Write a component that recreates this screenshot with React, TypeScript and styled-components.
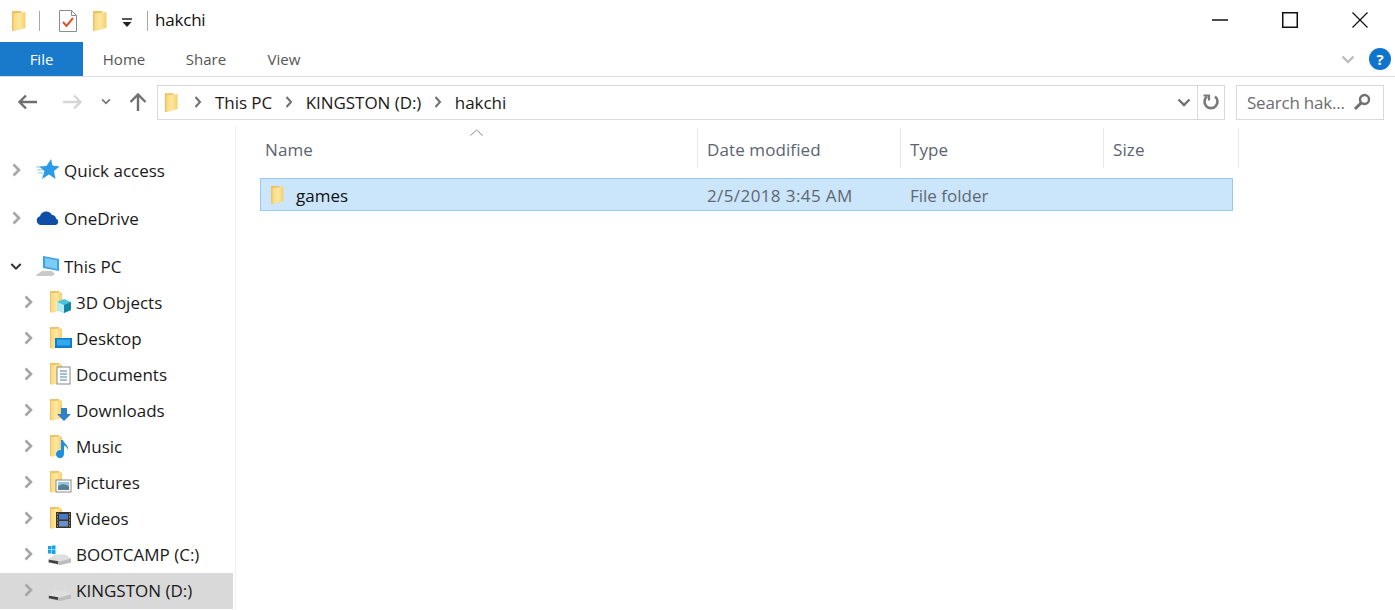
import styled, { createGlobalStyle } from "styled-components";

const GlobalStyle = createGlobalStyle`
  html, body {
    margin: 0;
    padding: 0;
    background: #fff;
  }
  * {
    box-sizing: border-box;
  }
`;

const Window = styled.div`
  width: 1395px;
  height: 610px;
  overflow: hidden;
  display: flex;
  flex-direction: column;
  background: #fff;
  color: #1a1a1a;
  font-family: "Open Sans", "Noto Sans", sans-serif;
  font-size: 17px;
`;

const TitleBar = styled.div`
  height: 42px;
  display: flex;
  align-items: center;
  padding-left: 11px;
`;

const QuickSep = styled.div<{ $left: number }>`
  width: 1px;
  height: 20px;
  margin-left: ${({ $left }) => $left}px;
  background: #a8a8a8;
`;

const QuickIcon = styled.div<{ $left: number; $top?: number }>`
  display: flex;
  margin-left: ${({ $left }) => $left}px;
  margin-top: ${({ $top }) => $top ?? 0}px;
`;

const TitleText = styled.div`
  margin-left: 7px;
  margin-top: -3px;
  font-size: 17px;
  letter-spacing: -0.2px;
  color: #111;
`;

const WindowControls = styled.div`
  margin-left: auto;
  display: flex;
  height: 100%;
`;

const ControlButton = styled.div`
  width: 70px;
  display: flex;
  align-items: center;
  justify-content: center;
  padding-bottom: 3px;
`;

const TabBar = styled.div`
  height: 35px;
  display: flex;
  align-items: stretch;
  border-bottom: 1px solid #dadbdc;
`;

const FileTab = styled.div`
  width: 83px;
  height: 34px;
  background: #1979ca;
  color: #fff;
  display: flex;
  align-items: center;
  justify-content: center;
  font-size: 15px;
`;

const Tab = styled.div<{ $width: number }>`
  width: ${({ $width }) => $width}px;
  display: flex;
  align-items: center;
  justify-content: center;
  font-size: 15px;
  color: #555;
`;

const TabTools = styled.div`
  margin-left: auto;
  display: flex;
  align-items: center;
  gap: 12px;
  padding-right: 4px;
`;

const HelpBadge = styled.div`
  width: 22px;
  height: 22px;
  border-radius: 50%;
  background: #0f74cc;
  color: #fff;
  font-size: 15px;
  font-weight: 700;
  display: flex;
  align-items: center;
  justify-content: center;
`;

const NavRow = styled.div`
  height: 49px;
  display: flex;
  align-items: center;
  padding: 0 11px 0 17px;
`;

const NavButtons = styled.div`
  width: 140px;
  display: flex;
  align-items: center;
`;

const NavButton = styled.div<{ $left?: number }>`
  display: flex;
  margin-left: ${({ $left }) => $left ?? 0}px;
`;

const AddressBox = styled.div`
  width: 1068px;
  height: 35px;
  margin-top: 1px;
  border: 1px solid #d9d9d9;
  display: flex;
  align-items: center;
  padding-left: 6px;
`;

const AddressFolder = styled.div`
  display: flex;
  margin-right: 15px;
`;

const Crumb = styled.span`
  color: #1a1a1a;
  font-size: 17px;
  margin: 0 12.5px 0 13px;
  white-space: nowrap;
  letter-spacing: -0.05px;
`;

const AddressEnd = styled.div`
  margin-left: auto;
  height: 100%;
  display: flex;
  align-items: center;
`;

const AddressRefresh = styled.div`
  width: 27px;
  height: 100%;
  border-left: 1px solid #d9d9d9;
  margin-left: 6px;
  display: flex;
  align-items: center;
  justify-content: center;
`;

const SearchBox = styled.div`
  width: 148px;
  height: 35px;
  margin-top: 1px;
  margin-left: 11px;
  border: 1px solid #d9d9d9;
  display: flex;
  align-items: center;
  justify-content: space-between;
  padding: 0 12px 0 10px;
  color: #6d6d6d;
  font-size: 17px;
  letter-spacing: -0.2px;
  white-space: nowrap;
`;

const Body = styled.div`
  flex: 1;
  display: flex;
  min-height: 0;
`;

const Sidebar = styled.nav`
  width: 236px;
  padding-top: 27px;
  padding-right: 2px;
  border-right: 1px solid #f0f0f0;
  display: flex;
  flex-direction: column;
`;

const TreeRow = styled.div<{ $level: number; $selected?: boolean; $gap?: boolean }>`
  height: 36px;
  flex: none;
  display: flex;
  align-items: center;
  margin-bottom: ${({ $gap }) => ($gap ? 12 : 0)}px;
  padding-left: ${({ $level }) => ($level ? 22 : 10)}px;
  padding-bottom: 2px;
  background: ${({ $selected }) => ($selected ? "#d9d9d9" : "transparent")};
`;

const Expander = styled.div`
  width: 12px;
  display: flex;
  justify-content: center;
`;

const TreeIcon = styled.div`
  width: 28px;
  margin-left: 14px;
  height: 26px;
  display: flex;
  align-items: center;
`;

const TreeLabel = styled.span`
  font-size: 17px;
  white-space: nowrap;
`;

const Content = styled.main`
  flex: 1;
  padding: 2px 0 0 24px;
`;

const HeaderRow = styled.div`
  position: relative;
  height: 40px;
  width: 979px;
  display: grid;
  grid-template-columns: 438px 203px 203px 135px;
  margin-bottom: 10px;
`;

const HeaderCell = styled.div<{ $inset?: number }>`
  display: flex;
  align-items: center;
  padding-left: ${({ $inset }) => $inset ?? 9}px;
  padding-top: 2px;
  font-size: 17px;
  letter-spacing: 0.1px;
  color: #5b6470;
  border-right: 1px solid #e8e8e8;
`;

const SortArrow = styled.svg`
  position: absolute;
  left: 210px;
  top: 1px;
`;

const FileRow = styled.div`
  width: 973px;
  height: 33px;
  background: #cbe5fb;
  border: 1px solid #99c9ee;
  display: grid;
  grid-template-columns: 437px 203px 1fr;
  align-items: center;
`;

const NameCell = styled.div`
  display: flex;
  align-items: center;
  padding-left: 9px;
  gap: 11px;
  font-size: 17px;
  color: #111;
`;

const NameText = styled.span`
  padding-top: 1px;
`;

const MetaCell = styled.div<{ $spacing?: number }>`
  padding-left: 9px;
  padding-top: 1px;
  font-size: 17px;
  letter-spacing: ${({ $spacing }) => $spacing ?? 0}px;
  color: #5f6872;
`;

const FolderGradient = () => (
  <defs>
    <linearGradient id="folderFace" x1="0" x2="1" y1="0" y2="0">
      <stop offset="0" stopColor="#fbd97f" />
      <stop offset="0.5" stopColor="#fde7a0" />
      <stop offset="1" stopColor="#f6cf6a" />
    </linearGradient>
  </defs>
);

const Folder = ({ w = 16, h = 22 }: { w?: number; h?: number }) => (
  <svg width={w} height={h} viewBox="0 0 16 22">
    <FolderGradient />
    <path d="M1 1h9l1 2v16l-10 2z" fill="#ecc263" />
    <path d="M2.500 3.500l12-1.500v16l-12 3z" fill="url(#folderFace)" />
  </svg>
);

const SmallFolder = ({ children }: { children: React.ReactNode }) => (
  <svg width="26" height="24" viewBox="0 0 26 24">
    <FolderGradient />
    <path d="M2 1h9l1 2v17l-10 2z" fill="#ecc263" />
    <path d="M3 3l11-.5V20L3 23z" fill="url(#folderFace)" />
    {children}
  </svg>
);

const Drive = ({ win }: { win?: boolean }) => (
  <svg width="24" height="24" viewBox="0 0 24 24">
    {win && (
      <g fill="#17a5e6">
        <rect x="0" y="4" width="3.500" height="3.500" />
        <rect x="4" y="3.500" width="3.500" height="4" />
        <rect x="0" y="8" width="3.500" height="3.500" />
        <rect x="4" y="8" width="3.500" height="4" />
      </g>
    )}
    <path d="M0 17.500l7-5h10l6 4v4l-11 2.500-12-2.500z" fill="#dedede" />
    <path d="M0 17.500l12 2 11-3v4l-11 2.500-12-2.500z" fill="#bdbdbd" />
    <path d="M1 17.700l9 1.600v2.700l-9-1.800z" fill="#3f3f3f" />
  </svg>
);

const Chevron = ({ color = "#a6a6a6" }: { color?: string }) => (
  <svg width="9" height="14" viewBox="0 0 9 14">
    <path d="M1.500 1.500L7 7l-5.500 5.500" fill="none" stroke={color} strokeWidth="2.600" />
  </svg>
);

const DownChevron = ({ color = "#333", w = 14 }: { color?: string; w?: number }) => (
  <svg width={w} height="9" viewBox="0 0 14 9">
    <path d="M1.500 1.500L7 7l5.500-5.500" fill="none" stroke={color} strokeWidth="2.400" />
  </svg>
);

const CrumbSep = () => (
  <svg width="8" height="12" viewBox="0 0 8 12">
    <path d="M1.500 1L6 6l-4.500 5" fill="none" stroke="#707070" strokeWidth="2" />
  </svg>
);

const Arrow = ({ color, flip }: { color: string; flip?: boolean }) => (
  <svg width="21" height="16" viewBox="0 0 21 16" transform={flip ? "scale(-1 1)" : undefined}>
    <path d="M20 8H3M9 1.500L2.500 8 9 14.500" fill="none" stroke={color} strokeWidth="2.400" />
  </svg>
);

const icons: Record<string, React.ReactNode> = {
  objects: (
    <SmallFolder>
      <path d="M9 12l7-3 7 3v8l-7 3-7-3z" fill="#4cc3da" />
      <path d="M9 12l7 3v8l-7-3z" fill="#b5ecf2" />
      <path d="M16 15l7-3v8l-7 3z" fill="#1487a8" />
    </SmallFolder>
  ),
  desktop: (
    <SmallFolder>
      <rect x="7" y="12" width="17" height="10" fill="#0f7fc9" />
      <rect x="9" y="13.500" width="13" height="6" fill="#35a7ec" />
    </SmallFolder>
  ),
  documents: (
    <SmallFolder>
      <rect x="9" y="5" width="13" height="17" fill="#fff" stroke="#8a8a8a" />
      <path d="M12 9h7M12 12h7M12 15h7M12 18h7" stroke="#4a7fb0" strokeWidth="1.200" />
    </SmallFolder>
  ),
  downloads: (
    <SmallFolder>
      <path d="M13 10h6v6h4l-7 7-7-7h4z" fill="#2f80c8" />
    </SmallFolder>
  ),
  music: (
    <SmallFolder>
      <path d="M13 6h2c1 4 6 5 5 10-.5-2-2-4-4-4.500V20a4 4 0 1 1-3-3.800z" fill="#1b8fe0" />
    </SmallFolder>
  ),
  pictures: (
    <SmallFolder>
      <rect x="8" y="10" width="15" height="12" fill="#fff" stroke="#8a8a8a" />
      <rect x="10" y="12" width="11" height="4" fill="#8ec6e8" />
      <path d="M10 16l5-2 6 2v4H10z" fill="#5a7f93" />
    </SmallFolder>
  ),
  videos: (
    <SmallFolder>
      <rect x="8" y="6" width="15" height="16" fill="#33352f" />
      <rect x="11" y="8" width="9" height="5.500" fill="#4b77c9" />
      <rect x="11" y="15" width="9" height="5.500" fill="#6a8fd0" />
      <path d="M9 8h1M9 11h1M9 14h1M9 17h1M9 20h1M21 8h1M21 11h1M21 14h1M21 17h1M21 20h1" stroke="#e0c050" />
    </SmallFolder>
  ),
};

const tree = [
  { label: "3D Objects", icon: icons.objects },
  { label: "Desktop", icon: icons.desktop },
  { label: "Documents", icon: icons.documents },
  { label: "Downloads", icon: icons.downloads },
  { label: "Music", icon: icons.music },
  { label: "Pictures", icon: icons.pictures },
  { label: "Videos", icon: icons.videos },
  { label: "BOOTCAMP (C:)", icon: <Drive win /> },
  { label: "KINGSTON (D:)", icon: <Drive />, selected: true },
];

export default function App() {
  return (
    <Window>
      <GlobalStyle />
      <TitleBar>
        <Folder />
        <QuickSep $left={12} />
        <QuickIcon $left={18}>
          <svg width="20" height="24" viewBox="0 0 20 24">
            <path d="M1.500 1.500h12l5 5v16h-17z" fill="#fff" stroke="#8c8c8c" />
            <path d="M13.500 1.500v5h5" fill="none" stroke="#8c8c8c" />
            <path d="M5 13l3.500 4L15 9" fill="none" stroke="#e2532b" strokeWidth="2" />
          </svg>
        </QuickIcon>
        <QuickIcon $left={14}>
          <Folder />
        </QuickIcon>
        <QuickIcon $left={13} $top={4}>
          <svg width="12" height="10" viewBox="0 0 12 10">
            <path d="M1 1h10" stroke="#222" strokeWidth="1.500" />
            <path d="M1.500 4h9L6 9z" fill="#222" />
          </svg>
        </QuickIcon>
        <QuickSep $left={14} />
        <TitleText>hakchi</TitleText>
        <WindowControls>
          <ControlButton>
            <svg width="16" height="2" viewBox="0 0 16 2">
              <path d="M0 1h16" stroke="#111" strokeWidth="1.500" />
            </svg>
          </ControlButton>
          <ControlButton>
            <svg width="16" height="16" viewBox="0 0 16 16">
              <rect x="0.750" y="0.750" width="14.500" height="14.500" fill="none" stroke="#111" strokeWidth="1.500" />
            </svg>
          </ControlButton>
          <ControlButton>
            <svg width="16" height="16" viewBox="0 0 16 16">
              <path d="M.5.500l15 15M15.500.500l-15 15" stroke="#111" strokeWidth="1.200" />
            </svg>
          </ControlButton>
        </WindowControls>
      </TitleBar>

      <TabBar>
        <FileTab>File</FileTab>
        <Tab $width={82}>Home</Tab>
        <Tab $width={82}>Share</Tab>
        <Tab $width={74}>View</Tab>
        <TabTools>
          <DownChevron color="#bdbdbd" w={18} />
          <HelpBadge>?</HelpBadge>
        </TabTools>
      </TabBar>

      <NavRow>
        <NavButtons>
          <NavButton>
            <Arrow color="#6f6f6f" />
          </NavButton>
          <NavButton $left={24}>
            <Arrow color="#d6d6d6" flip />
          </NavButton>
          <NavButton $left={18}>
            <DownChevron color="#777" w={10} />
          </NavButton>
          <NavButton $left={17}>
            <svg width="20" height="20" viewBox="0 0 20 20">
              <path d="M10 19V3M2.500 10L10 2.500 17.500 10" fill="none" stroke="#6f6f6f" strokeWidth="2.400" />
            </svg>
          </NavButton>
        </NavButtons>
        <AddressBox>
          <AddressFolder>
            <Folder w={15} h={21} />
          </AddressFolder>
          <CrumbSep />
          <Crumb>This PC</Crumb>
          <CrumbSep />
          <Crumb>KINGSTON (D:)</Crumb>
          <CrumbSep />
          <Crumb>hakchi</Crumb>
          <AddressEnd>
            <DownChevron color="#707070" />
            <AddressRefresh>
              <svg width="18" height="18" viewBox="0 0 18 18">
                <path d="M13 3.500a6.500 6.500 0 1 1-8 0" fill="none" stroke="#7a7a7a" strokeWidth="2.600" />
                <path d="M1.500 2.500h5.500v5" fill="none" stroke="#7a7a7a" strokeWidth="2.200" />
              </svg>
            </AddressRefresh>
          </AddressEnd>
        </AddressBox>
        <SearchBox>
          Search hak...
          <svg width="18" height="18" viewBox="0 0 18 18">
            <circle cx="11.500" cy="6.500" r="4.500" fill="none" stroke="#707070" strokeWidth="2.400" />
            <path d="M8 10l-6 6" stroke="#707070" strokeWidth="3" />
          </svg>
        </SearchBox>
      </NavRow>

      <Body>
        <Sidebar>
          <TreeRow $level={0} $gap>
            <Expander><Chevron /></Expander>
            <TreeIcon>
              <svg width="24" height="22" viewBox="0 0 24 22">
                <path d="M15 0l1.500 6.500 7 1-5.500 4.500 1.500 8-6.500-4.500L6 20l2.500-8L3 7.500l7.500-.5z" fill="#2c9be6" />
                <path d="M0 8h5M1 11h6M2 14h5" stroke="#8cc8ee" strokeWidth="1.200" />
              </svg>
            </TreeIcon>
            <TreeLabel>Quick access</TreeLabel>
          </TreeRow>
          <TreeRow $level={0} $gap>
            <Expander><Chevron /></Expander>
            <TreeIcon>
              <svg width="24" height="16" viewBox="0 0 24 16">
                <path d="M5 15a4.500 4.500 0 0 1-1-8.800A6.500 6.500 0 0 1 16 5a4 4 0 0 1 4 3.500A3.500 3.500 0 0 1 20 15z" fill="#0f4fa8" />
              </svg>
            </TreeIcon>
            <TreeLabel>OneDrive</TreeLabel>
          </TreeRow>
          <TreeRow $level={0}>
            <Expander><DownChevron w={14} /></Expander>
            <TreeIcon>
              <svg width="24" height="22" viewBox="0 0 24 22">
                <path d="M7 1l16 3v12l-16-3z" fill="#3aa4e8" />
                <path d="M9 3l12 2.300V14L9 11.500z" fill="#7ecbf5" />
                <path d="M0 20l6-4h10l3 3-3 2H1z" fill="#c9c9c9" />
              </svg>
            </TreeIcon>
            <TreeLabel>This PC</TreeLabel>
          </TreeRow>
          {tree.map((item) => (
            <TreeRow key={item.label} $level={1} $selected={item.selected}>
              <Expander><Chevron /></Expander>
              <TreeIcon>{item.icon}</TreeIcon>
              <TreeLabel>{item.label}</TreeLabel>
            </TreeRow>
          ))}
        </Sidebar>

        <Content>
          <HeaderRow>
            <HeaderCell $inset={5}>Name</HeaderCell>
            <HeaderCell>Date modified</HeaderCell>
            <HeaderCell>Type</HeaderCell>
            <HeaderCell>Size</HeaderCell>
            <SortArrow width="13" height="7" viewBox="0 0 13 7">
              <path d="M.5 6.500l6-5.500 6 5.500" fill="none" stroke="#8a8a8a" />
            </SortArrow>
          </HeaderRow>
          <FileRow>
            <NameCell>
              <Folder w={15} h={20} />
              <NameText>games</NameText>
            </NameCell>
            <MetaCell $spacing={0.4}>2/5/2018 3:45 AM</MetaCell>
            <MetaCell>File folder</MetaCell>
          </FileRow>
        </Content>
      </Body>
    </Window>
  );
}
